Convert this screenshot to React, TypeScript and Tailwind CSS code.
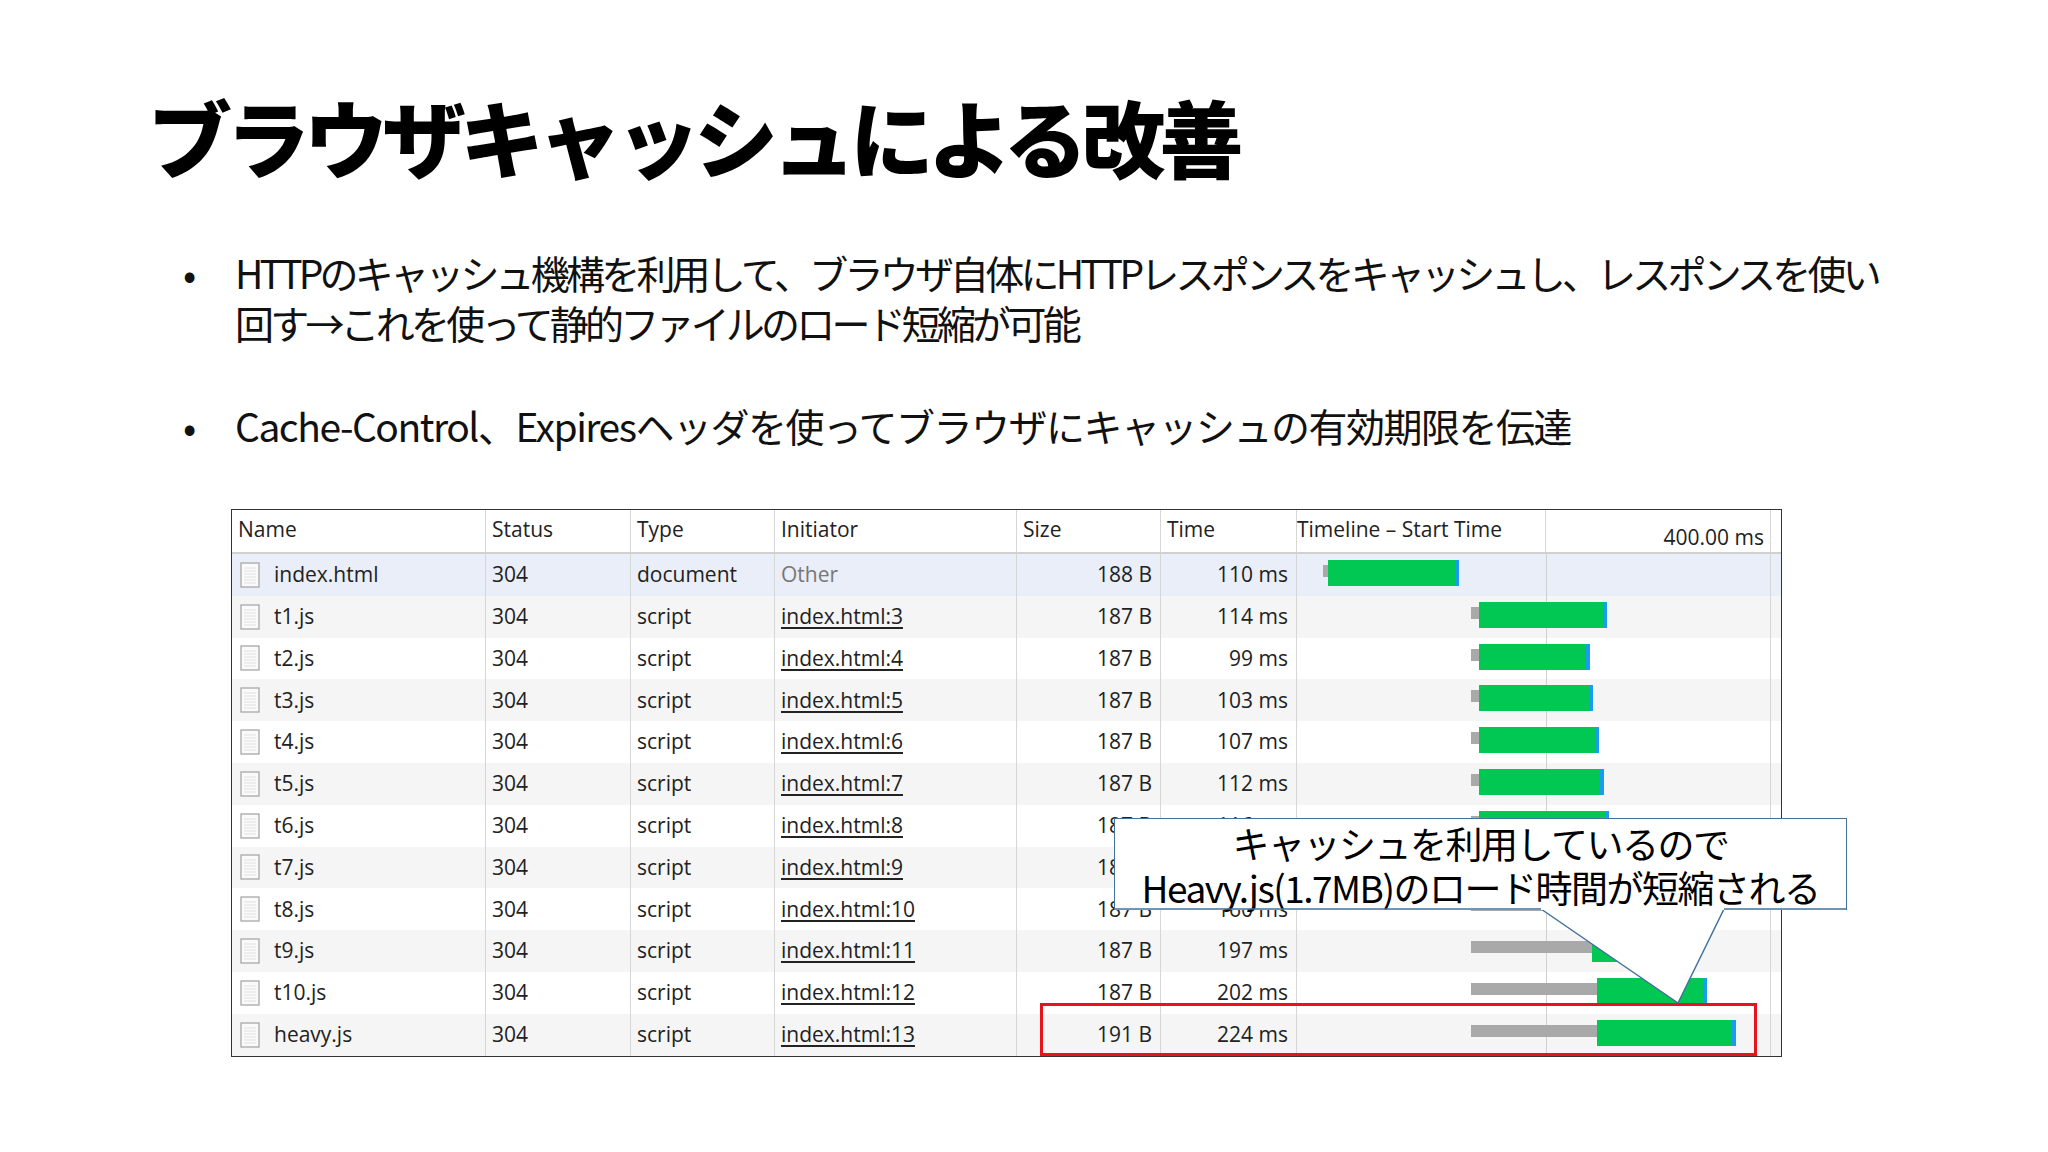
import React from "react";

const S = 1.306;
type Row = { name: string; status: string; type: string; init: string; size: string; time: string; bar?: [number, number, number, number] };
const rows: Row[] = [
  { name: "index.html", status: "304", type: "document", init: "Other", size: "188 B", time: "110 ms", bar: [1012, 1016, 1113, 1116] },
  { name: "t1.js", status: "304", type: "script", init: "index.html:3", size: "187 B", time: "114 ms", bar: [1125, 1131, 1226, 1229] },
  { name: "t2.js", status: "304", type: "script", init: "index.html:4", size: "187 B", time: "99 ms", bar: [1125, 1131, 1213, 1216] },
  { name: "t3.js", status: "304", type: "script", init: "index.html:5", size: "187 B", time: "103 ms", bar: [1125, 1131, 1216, 1219] },
  { name: "t4.js", status: "304", type: "script", init: "index.html:6", size: "187 B", time: "107 ms", bar: [1125, 1131, 1220, 1223] },
  { name: "t5.js", status: "304", type: "script", init: "index.html:7", size: "187 B", time: "112 ms", bar: [1125, 1131, 1224, 1227] },
  { name: "t6.js", status: "304", type: "script", init: "index.html:8", size: "187 B", time: "116 ms", bar: [1125, 1131, 1228, 1231] },
  { name: "t7.js", status: "304", type: "script", init: "index.html:9", size: "187 B", time: "150 ms", bar: [1125, 1170, 1240, 1243] },
  { name: "t8.js", status: "304", type: "script", init: "index.html:10", size: "187 B", time: "160 ms", bar: [1125, 1190, 1250, 1253] },
  { name: "t9.js", status: "304", type: "script", init: "index.html:11", size: "187 B", time: "197 ms", bar: [1125, 1218, 1290, 1293] },
  { name: "t10.js", status: "304", type: "script", init: "index.html:12", size: "187 B", time: "202 ms", bar: [1125, 1222, 1303, 1306] },
  { name: "heavy.js", status: "304", type: "script", init: "index.html:13", size: "191 B", time: "224 ms", bar: [1125, 1222, 1325, 1328] },
];

const cols = ["w-[254px]", "w-[145px]", "w-[144px]", "w-[242px]", "w-[144px]", "w-[136px]"];

function DocIcon() {
  return (
    <svg width="20" height="26" viewBox="0 0 20 26" className="shrink-0">
      <rect x="1" y="1" width="18" height="24" fill="#fafafa" stroke="#a8a8a8" strokeWidth="1.3" />
      <path d="M4 6h12M4 9h12M4 12h12M4 15h12M4 18h12M4 21h12" stroke="#e0e0e0" strokeWidth="1" />
    </svg>
  );
}

function Bar({ b }: { b: [number, number, number, number] }) {
  const x = (d: number) => (d - 992) * S;
  return (
    <>
      <div className="absolute top-[11px] h-[12px] bg-[#a9a9a9]" style={{ left: x(b[0]), width: x(b[1]) - x(b[0]) }} />
      <div className="absolute top-[6px] h-[26px] bg-[#00c853]" style={{ left: x(b[1]), width: x(b[2]) - x(b[1]) }} />
      <div className="absolute top-[6px] h-[26px] bg-[#1a9cf0]" style={{ left: x(b[2]), width: x(b[3]) - x(b[2]) }} />
    </>
  );
}

export default function App() {
  return (
    <div className="relative w-[2048px] h-[1152px] bg-white overflow-hidden" style={{ fontFamily: '"Noto Sans CJK JP", "Noto Sans", sans-serif' }}>
      <h1 className="absolute left-[148px] top-[94px] text-[84px] font-black tracking-[-6px] text-black leading-none">ブラウザキャッシュによる改善</h1>
      <div className="absolute left-[183px] top-[247px] text-[39px] leading-[50px] text-[#111] tracking-[-1.5px]">
        <div className="flex">
          <span className="w-[52px]">•</span>
          <span className="tracking-[-3.8px]">HTTPのキャッシュ機構を利用して、ブラウザ自体にHTTPレスポンスをキャッシュし、レスポンスを使い<br />回す→これを使って静的ファイルのロード短縮が可能</span>
        </div>
        <div className="flex mt-[53px]">
          <span className="w-[52px]">•</span>
          <span>Cache-Control、Expiresヘッダを使ってブラウザにキャッシュの有効期限を伝達</span>
        </div>
      </div>

      <div className="absolute left-[231px] top-[509px] w-[1551px] border-[1.5px] border-[#333] text-[21px] text-[#222]" style={{ fontFamily: '"Open Sans", "Noto Sans", sans-serif' }}>
        <div className="flex h-[44px] border-b-2 border-[#d0d0d0]">
          {["Name", "Status", "Type", "Initiator", "Size", "Time"].map((h, i) => (
            <div key={h} className={`${cols[i]} shrink-0 border-r border-[#d6d6d6] px-[6px] pt-[4px]`}>{h}</div>
          ))}
          <div className="w-[249px] shrink-0 border-r border-[#d6d6d6] pt-[4px]">Timeline – Start Time</div>
          <div className="w-[225px] shrink-0 border-r border-[#d6d6d6] text-right pr-[6px] pt-[12px]">400.00 ms</div>
          <div className="flex-1" />
        </div>
        {rows.map((r, i) => (
          <div key={r.name} className={`flex h-[41.8px] items-center ${i === 0 ? "bg-[#e9eef8]" : i % 2 === 0 ? "bg-white" : "bg-[#f5f5f5]"}`}>
            <div className={`${cols[0]} h-full shrink-0 border-r border-[#d6d6d6] flex items-center gap-[14px] pl-[8px]`}><DocIcon />{r.name}</div>
            <div className={`${cols[1]} h-full shrink-0 border-r border-[#d6d6d6] flex items-center px-[6px]`}>{r.status}</div>
            <div className={`${cols[2]} h-full shrink-0 border-r border-[#d6d6d6] flex items-center px-[6px]`}>{r.type}</div>
            <div className={`${cols[3]} h-full shrink-0 border-r border-[#d6d6d6] flex items-center px-[6px] ${i === 0 ? "text-[#777]" : "underline underline-offset-[3px]"}`}>{r.init}</div>
            <div className={`${cols[4]} h-full shrink-0 border-r border-[#d6d6d6] flex items-center justify-end px-[8px]`}>{r.size}</div>
            <div className={`${cols[5]} h-full shrink-0 border-r border-[#d6d6d6] flex items-center justify-end px-[8px]`}>{r.time}</div>
            <div className="relative w-[474px] h-full shrink-0 border-r border-[#d6d6d6]">
              <div className="absolute left-[249px] top-0 bottom-0 w-px bg-[#d0d0d0]" />
              {r.bar && <Bar b={r.bar} />}
            </div>
            <div className="flex-1 h-full" />
          </div>
        ))}
      </div>

      <div className="absolute left-[1040px] top-[1003px] w-[717px] h-[53px] border-[3px] border-[#e8141c]" />

      <svg className="absolute left-0 top-0" width="2048" height="1152">
        <polygon points="1541,909 1678,1003 1724,909" fill="white" stroke="#41719c" strokeWidth="1.5" />
      </svg>
      <div className="absolute left-[1114px] top-[818px] w-[733px] h-[92px] bg-white border-[1.5px] border-[#41719c] border-b-0 flex flex-col items-center justify-center text-[37px] leading-[44px] text-black tracking-[-1.5px]">
        <div>キャッシュを利用しているので</div>
        <div>Heavy.js(1.7MB)のロード時間が短縮される</div>
      </div>
      <svg className="absolute left-0 top-0" width="2048" height="1152">
        <path d="M1114,909 L1541,909 M1724,909 L1847,909" stroke="#41719c" strokeWidth="1.5" />
      </svg>
    </div>
  );
}
